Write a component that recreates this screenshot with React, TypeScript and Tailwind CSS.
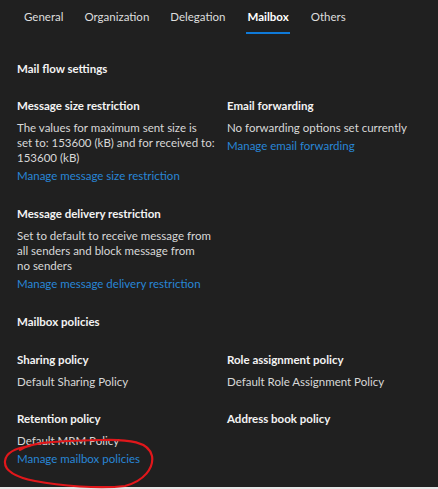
import React from "react";

const H = ({ children }: { children: React.ReactNode }) => (
  <div className="text-[11.5px] leading-[16px] font-bold text-[#f3f3f3]">{children}</div>
);
const B = ({ children }: { children: React.ReactNode }) => (
  <div className="mt-[6px] text-[11.5px] leading-[15px] text-[#d8d8d8]">{children}</div>
);
const L = ({ children }: { children: React.ReactNode }) => (
  <div className="mt-[3px] text-[11.5px] leading-[16px] text-[#2886d6]">{children}</div>
);

export default function App() {
  const tabs = ["General", "Organization", "Delegation", "Mailbox", "Others"];
  return (
    <div
      className="relative w-[438px] h-[489px] bg-[#e6e6e6] overflow-hidden"
      style={{ fontFamily: 'Lato, "Open Sans", sans-serif' }}
    >
      <div className="h-[487px] bg-[#202020]">
        <div className="flex pl-[24px] gap-[21px] h-[34px]">
          {tabs.map((t) => (
            <div
              key={t}
              className={
                t === "Mailbox"
                  ? "h-[34px] flex items-center border-b-2 border-[#0f7ad8] text-[11.5px] font-bold text-white pt-[2px] px-[1px]"
                  : "h-[34px] flex items-center border-b-2 border-transparent text-[11.5px] text-[#dedede] pt-[2px]"
              }
            >
              {t}
            </div>
          ))}
        </div>
        <div className="pl-[17px] pt-[27px]">
          <H>Mail flow settings</H>
          <div className="grid grid-cols-[210px_200px] mt-[21px]">
            <div>
              <H>Message size restriction</H>
              <B>
                The values for maximum sent size is
                <br />
                set to: 153600 (kB) and for received to:
                <br />
                153600 (kB)
              </B>
              <L>Manage message size restriction</L>
            </div>
            <div>
              <H>Email forwarding</H>
              <B>No forwarding options set currently</B>
              <L>Manage email forwarding</L>
            </div>
          </div>
          <div className="mt-[22px]">
            <H>Message delivery restriction</H>
            <B>
              Set to default to receive message from
              <br />
              all senders and block message from
              <br />
              no senders
            </B>
            <L>Manage message delivery restriction</L>
          </div>
          <div className="mt-[22px]">
            <H>Mailbox policies</H>
          </div>
          <div className="grid grid-cols-[210px_200px] mt-[22px]">
            <div>
              <H>Sharing policy</H>
              <B>Default Sharing Policy</B>
            </div>
            <div>
              <H>Role assignment policy</H>
              <B>Default Role Assignment Policy</B>
            </div>
          </div>
          <div className="grid grid-cols-[210px_200px] mt-[22px]">
            <div>
              <H>Retention policy</H>
              <B>Default MRM Policy</B>
              <L>Manage mailbox policies</L>
            </div>
            <div>
              <H>Address book policy</H>
            </div>
          </div>
        </div>
      </div>
      <svg
        className="absolute left-0 top-0 pointer-events-none"
        width="438"
        height="489"
        viewBox="0 0 438 489"
      >
        <path
          d="M 20 450 C 30 442, 60 441, 100 440 C 130 439, 149 442, 152 456 C 154 468, 144 481, 125 486 C 100 489, 60 486, 35 481 C 15 477, 4 470, 5 461 C 6 452, 15 448, 30 446"
          fill="none"
          stroke="#e0171b"
          strokeWidth="2.2"
          strokeLinecap="round"
        />
      </svg>
    </div>
  );
}
